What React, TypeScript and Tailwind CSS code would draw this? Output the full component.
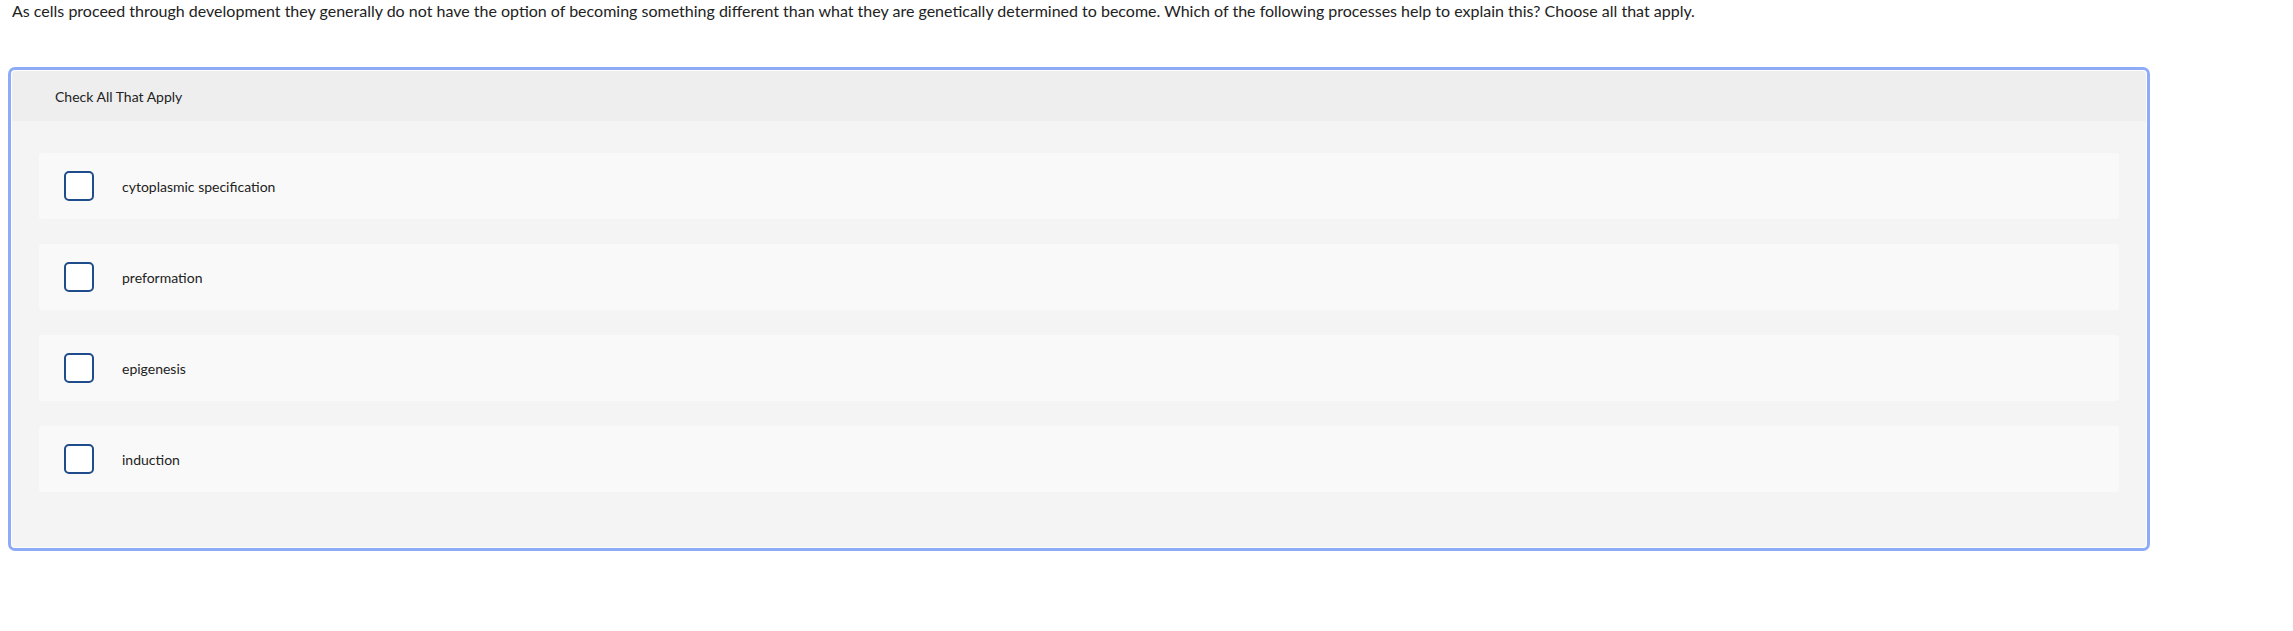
const options = [
  "cytoplasmic specification",
  "preformation",
  "epigenesis",
  "induction",
];

function OptionRow({ label }: { label: string }) {
  return (
    <label className="flex h-[66px] items-center rounded-[3px] bg-[#f9f9f9] pl-[25px]">
      <span className="h-[30px] w-[30px] shrink-0 rounded-[5px] border-2 border-[#1f4c8a] bg-white" />
      <span className="ml-[28px] text-[14px] text-[#222]">{label}</span>
    </label>
  );
}

export default function App() {
  return (
    <div className="bg-white font-['Lato',sans-serif] text-[#222]">
      <p className="pl-[12px] text-[16px] leading-[22px]">
        As cells proceed through development they generally do not have the option of becoming something
        different than what they are genetically determined to become. Which of the following processes help
        to explain this? Choose all that apply.
      </p>

      <div className="ml-[8px] mt-[45px] w-[2142px] rounded-[7px] border-[3px] border-[#8eabf8] bg-white p-px">
        <div className="overflow-hidden rounded-[4px] bg-[#f4f4f4]">
          <div className="flex h-[50px] items-center bg-[#eeeeee] pl-[43px] text-[14px]">
            Check All That Apply
          </div>
          <div className="flex flex-col gap-[25px] px-[27px] pb-[55px] pt-[32px]">
            {options.map((o) => (
              <OptionRow key={o} label={o} />
            ))}
          </div>
        </div>
      </div>
    </div>
  );
}
